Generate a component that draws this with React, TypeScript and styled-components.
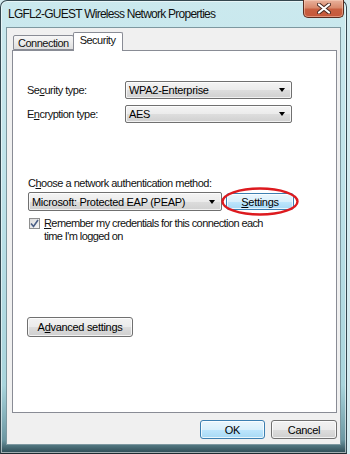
import React from "react";
import styled, { createGlobalStyle } from "styled-components";

const GlobalStyle = createGlobalStyle`
  html, body {
    margin: 0;
    padding: 0;
    background: #d4ebf0;
  }
  body {
    font-family: "Liberation Sans", Arial, sans-serif;
    font-size: 11px;
    letter-spacing: -0.5px;
    color: #000;
  }
`;

function App() {
  return (
    <>
      <GlobalStyle />
      <Window>
        <TitleBar>
          <Title>LGFL2-GUEST Wireless Network Properties</Title>
          <CloseButton aria-label="Close">
            <svg width="14" height="11" viewBox="0 0 14 11">
              <path d="M2 1.5 L12 9.5 M12 1.5 L2 9.5" stroke="#4a2a22" strokeWidth="4" strokeLinecap="round" />
              <path d="M2 1.5 L12 9.5 M12 1.5 L2 9.5" stroke="#ffffff" strokeWidth="2.2" strokeLinecap="round" />
            </svg>
          </CloseButton>
        </TitleBar>
        <Client>
          <TabStrip>
            <Tab>Connection</Tab>
            <Tab $active>Security</Tab>
          </TabStrip>
          <Panel>
            <FieldRow>
              <Label>Se<u>c</u>urity type:</Label>
              <Combo>
                <ComboValue>WPA2-Enterprise</ComboValue>
                <Arrow />
              </Combo>
            </FieldRow>
            <FieldRow $gap={6}>
              <Label>E<u>n</u>cryption type:</Label>
              <Combo>
                <ComboValue>AES</ComboValue>
                <Arrow />
              </Combo>
            </FieldRow>

            <Caption>C<u>h</u>oose a network authentication method:</Caption>
            <MethodRow>
              <Combo $width={194} $height={19}>
                <ComboValue>Microsoft: Protected EAP (PEAP)</ComboValue>
                <Arrow />
              </Combo>
              <Highlight>
                <Button $primary $width={68} $height={17}>
                  <u>S</u>ettings
                </Button>
                <Ring viewBox="0 0 78 29" preserveAspectRatio="none">
                  <ellipse cx="39" cy="14.5" rx="37.5" ry="13" fill="none" stroke="#dd1a1f" strokeWidth="2.4" />
                </Ring>
              </Highlight>
            </MethodRow>

            <CheckRow>
              <CheckBox>
                <svg width="9" height="9" viewBox="0 0 9 9">
                  <path d="M1 4.5 L3.5 7.5 L8 1" fill="none" stroke="#4a5f86" strokeWidth="1.6" />
                </svg>
              </CheckBox>
              <CheckText>
                <u>R</u>emember my credentials for this connection each
                <br />
                time I'm logged on
              </CheckText>
            </CheckRow>

            <Button $width={106} $height={20} $top={74}>
              A<u>d</u>vanced settings
            </Button>
          </Panel>
          <Footer>
            <Button $primary $width={65} $height={19}>OK</Button>
            <Button $width={66} $height={19}>Cancel</Button>
          </Footer>
        </Client>
      </Window>
    </>
  );
}

const Window = styled.div`
  width: 347px;
  height: 454px;
  box-sizing: border-box;
  border: 1px solid #34474f;
  border-bottom-color: #1e2b30;
  border-radius: 7px 7px 0 0;
  background: linear-gradient(180deg, #cbe9ee 0%, #bfe3ea 40%, #a9d5dd 85%, #6d98a3 97%, #2d4a53 100%);
  box-shadow: inset 0 0 0 1px rgba(255, 255, 255, 0.55);
  padding: 0 5px 8px 5px;
  display: flex;
  flex-direction: column;
`;

const TitleBar = styled.div`
  height: 26px;
  display: flex;
  align-items: flex-start;
  flex-shrink: 0;
`;

const Title = styled.div`
  padding: 6px 0 0 2px;
  font-family: "Liberation Sans", Arial, sans-serif;
  font-size: 12px;
  color: #111;
  letter-spacing: -0.75px;
`;

const CloseButton = styled.div`
  margin-left: auto;
  margin-right: -3px;
  margin-top: -1px;
  width: 41px;
  height: 18px;
  box-sizing: border-box;
  border: 1px solid #5a2b1f;
  border-top: none;
  border-radius: 0 0 5px 5px;
  background: linear-gradient(180deg, #e9b29c 0%, #d98a6d 45%, #c85f40 55%, #c6583b 100%);
  box-shadow: inset 0 0 0 1px rgba(255, 220, 200, 0.45);
  display: flex;
  align-items: center;
  justify-content: center;
`;

const Client = styled.div`
  flex: 1;
  background: #f0f0f0;
  border: 1px solid #7d98a0;
  padding: 5px 3px 5px 5px;
  display: flex;
  flex-direction: column;
`;

const TabStrip = styled.div`
  display: flex;
  align-items: flex-end;
  height: 18px;
  padding-left: 1px;
  margin-bottom: -1px;
  position: relative;
  z-index: 1;
`;

const Tab = styled.div<{ $active?: boolean }>`
  box-sizing: border-box;
  height: ${(p) => (p.$active ? "19px" : "15px")};
  margin-bottom: ${(p) => (p.$active ? "0" : "1px")};
  padding: ${(p) => (p.$active ? "1px 7px 0 6px" : "1px 4px 0 4px")};
  border: 1px solid #898c95;
  border-bottom: ${(p) => (p.$active ? "none" : "1px solid #898c95")};
  margin-left: ${(p) => (p.$active ? "-1px" : "0")};
  border-radius: 2px 2px 0 0;
  background: ${(p) =>
    p.$active ? "#ffffff" : "linear-gradient(180deg, #f7f7f7 0%, #ececec 50%, #dedede 100%)"};
  line-height: 13px;
  color: #111;
`;

const Panel = styled.div`
  height: 363px;
  box-sizing: border-box;
  background: #fff;
  border: 1px solid #898c95;
  padding: 30px 0 0 14px;
  display: flex;
  flex-direction: column;
  align-items: flex-start;
`;

const FieldRow = styled.div<{ $gap?: number }>`
  display: grid;
  grid-template-columns: 98px 167px;
  align-items: center;
  margin-top: ${(p) => p.$gap ?? 0}px;
`;

const Label = styled.span`
  color: #111;
  line-height: 13px;
`;

const Combo = styled.div<{ $width?: number; $height?: number }>`
  width: ${(p) => (p.$width ? `${p.$width}px` : "auto")};
  height: ${(p) => p.$height ?? 18}px;
  box-sizing: border-box;
  border: 1px solid #707070;
  border-radius: 2px;
  background: linear-gradient(180deg, #f4f4f4 0%, #ebebeb 50%, #dddddd 51%, #d0d0d0 100%);
  box-shadow: inset 0 0 0 1px rgba(255, 255, 255, 0.7);
  display: flex;
  align-items: center;
  padding: 0 6px 0 3px;
`;

const ComboValue = styled.span`
  flex: 1;
  letter-spacing: -0.3px;
  color: #000;
  white-space: nowrap;
`;

const Arrow = styled.span`
  width: 0;
  height: 0;
  border-left: 3.5px solid transparent;
  border-right: 3.5px solid transparent;
  border-top: 4px solid #000;
`;

const Caption = styled.div`
  margin-top: 54px;
  margin-left: 1px;
  line-height: 13px;
  color: #111;
`;

const MethodRow = styled.div`
  margin-top: 2px;
  margin-left: 1px;
  display: flex;
  align-items: center;
  gap: 4px;
`;

const Highlight = styled.div`
  position: relative;
  display: flex;
`;

const Ring = styled.svg`
  position: absolute;
  left: -5px;
  top: -6px;
  width: 78px;
  height: 29px;
  pointer-events: none;
`;

const Button = styled.div<{ $primary?: boolean; $width: number; $height: number; $top?: number }>`
  width: ${(p) => p.$width}px;
  height: ${(p) => p.$height}px;
  margin-top: ${(p) => p.$top ?? 0}px;
  box-sizing: border-box;
  border: 1px solid ${(p) => (p.$primary ? "#3c7fb1" : "#707070")};
  border-radius: 3px;
  background: ${(p) =>
    p.$primary
      ? "linear-gradient(180deg, #eaf6fd 0%, #d9f0fc 50%, #bee6fd 51%, #a7d9f5 100%)"
      : "linear-gradient(180deg, #f2f2f2 0%, #ebebeb 50%, #dddddd 51%, #cfcfcf 100%)"};
  box-shadow: inset 0 0 0 1px rgba(255, 255, 255, 0.75);
  display: flex;
  align-items: center;
  justify-content: center;
  color: #000;
  letter-spacing: -0.3px;
  white-space: nowrap;
`;

const CheckRow = styled.div`
  margin-top: 6px;
  margin-left: 2px;
  display: flex;
  align-items: flex-start;
  gap: 4px;
`;

const CheckBox = styled.div`
  width: 11px;
  height: 11px;
  margin-top: 1px;
  box-sizing: border-box;
  border: 1px solid #8e8f8f;
  background: linear-gradient(135deg, #dcdcdc 0%, #f6f6f6 100%);
  display: flex;
  align-items: center;
  justify-content: center;
`;

const CheckText = styled.div`
  line-height: 13px;
  letter-spacing: -0.6px;
  color: #111;
`;

const Footer = styled.div`
  margin-top: auto;
  display: flex;
  justify-content: flex-end;
  gap: 6px;
`;

export default App;
